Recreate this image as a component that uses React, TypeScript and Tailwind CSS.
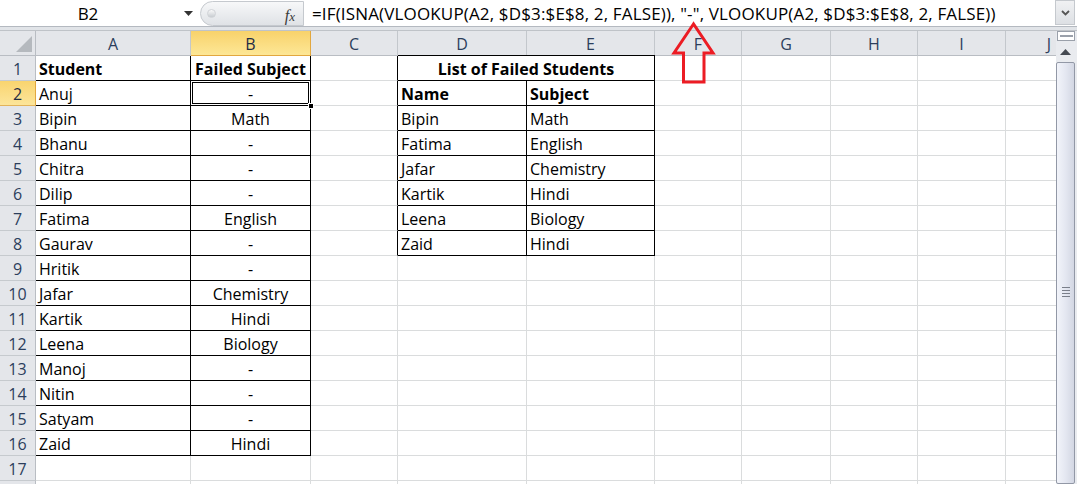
import React from "react";

const FONT = { fontFamily: "'Open Sans', 'Noto Sans', sans-serif" };

const COLS = [
  { k: "A", w: "w-[155px]" },
  { k: "B", w: "w-[120px]" },
  { k: "C", w: "w-[87px]" },
  { k: "D", w: "w-[129px]" },
  { k: "E", w: "w-[128px]" },
  { k: "F", w: "w-[87px]" },
  { k: "G", w: "w-[89px]" },
  { k: "H", w: "w-[87px]" },
  { k: "I", w: "w-[88px]" },
  { k: "J", w: "w-[87px]" },
];

const A = ["Student", "Anuj", "Bipin", "Bhanu", "Chitra", "Dilip", "Fatima", "Gaurav", "Hritik", "Jafar", "Kartik", "Leena", "Manoj", "Nitin", "Satyam", "Zaid"];
const B = ["Failed Subject", "-", "Math", "-", "-", "-", "English", "-", "-", "Chemistry", "Hindi", "Biology", "-", "-", "-", "Hindi"];
const DE: [string, string][] = [
  ["Name", "Subject"],
  ["Bipin", "Math"],
  ["Fatima", "English"],
  ["Jafar", "Chemistry"],
  ["Kartik", "Hindi"],
  ["Leena", "Biology"],
  ["Zaid", "Hindi"],
];

function Cell({ w, border, children, align = "left", bold = false, extra = "" }: { w: string; border: string; children?: React.ReactNode; align?: "left" | "center"; bold?: boolean; extra?: string }) {
  return (
    <div
      className={`${w} h-full shrink-0 box-border border-r border-b ${border} relative flex items-center overflow-visible whitespace-nowrap text-[16px] leading-none text-black pt-[2px] ${align === "center" ? "justify-center" : "pl-[3px]"} ${bold ? "font-bold" : ""} ${extra}`}
    >
      {children}
    </div>
  );
}

const GRID = "border-[#dadcdd]";
const BLACK = "border-black";

function Row({ r }: { r: number }) {
  const sel = r === 2;
  const cells: React.ReactNode[] = [];
  COLS.forEach((c) => {
    if (c.k === "A") {
      const inT = r <= 16;
      cells.push(
        <Cell key="A" w={c.w} border={inT ? BLACK : GRID} bold={r === 1}>
          {inT ? A[r - 1] : ""}
        </Cell>
      );
    } else if (c.k === "B") {
      const inT = r <= 16;
      cells.push(
        <Cell key="B" w={c.w} border={inT ? BLACK : GRID} bold={r === 1} align="center">
          {inT ? B[r - 1] : ""}
          {sel && (
            <>
              <div className="absolute -left-px -top-px -right-px -bottom-px border border-black pointer-events-none">
                <div className="absolute inset-px border border-black" />
              </div>
              <div className="absolute -right-[4px] -bottom-[4px] w-[6px] h-[6px] bg-black border border-white z-10" />
            </>
          )}
        </Cell>
      );
    } else if (c.k === "C") {
      cells.push(
        <div key="C" className={`${c.w} h-full shrink-0 box-border border-b ${GRID} border-r ${r <= 8 ? "border-r-black" : "border-r-[#dadcdd]"}`} />
      );
    } else if (c.k === "D") {
      if (r === 1) {
        cells.push(
          <Cell key="D" w="w-[257px]" border={BLACK} bold align="center" extra="shadow-[0_-1px_0_0_#000]">
            List of Failed Students
          </Cell>
        );
      } else if (r <= 8) {
        const d = DE[r - 2];
        cells.push(
          <Cell key="D" w={c.w} border={BLACK} bold={r === 2}>
            {d[0]}
          </Cell>
        );
      } else {
        cells.push(<Cell key="D" w={c.w} border={GRID} />);
      }
    } else if (c.k === "E") {
      if (r === 1) return;
      if (r <= 8) {
        const d = DE[r - 2];
        cells.push(
          <Cell key="E" w={c.w} border={BLACK} bold={r === 2}>
            {d[1]}
          </Cell>
        );
      } else {
        cells.push(<Cell key="E" w={c.w} border={GRID} />);
      }
    } else {
      cells.push(<Cell key={c.k} w={c.w} border={GRID} />);
    }
  });
  return (
    <div className="flex h-[25px] shrink-0">
      <div
        className={`w-[36px] h-full shrink-0 box-border border-r border-b flex items-center justify-center text-[16px] leading-none pt-[2px] ${
          sel
            ? "bg-gradient-to-b from-[#f9d46e] to-[#fce59a] border-r-[#e2a73f] border-b-[#e2b35a] text-[#1f2d44]"
            : "bg-[#e4e6ea] border-r-[#b9bdc3] border-b-[#c6cace] text-[#2c3e5c]"
        }`}
      >
        {r <= 17 ? r : ""}
      </div>
      {cells}
    </div>
  );
}

function HeaderRow() {
  return (
    <div className="flex h-[26px] shrink-0 box-border border-t border-[#bfc3c8] bg-[#e4e6ea]">
      <div className="w-[36px] h-full shrink-0 box-border border-r border-b border-r-[#b9bdc3] border-b-[#b9bdc3] relative">
        <svg className="absolute right-[3px] bottom-[3px]" width="16" height="16" viewBox="0 0 16 16">
          <polygon points="16,0 16,16 0,16" fill="#b5b9be" />
        </svg>
      </div>
      {COLS.map((c) => (
        <div
          key={c.k}
          className={`${c.w} h-full shrink-0 box-border border-r border-b flex items-center justify-center text-[16px] leading-none pt-[2px] ${
            c.k === "B"
              ? "bg-gradient-to-b from-[#f8d26a] to-[#fde796] border-r-[#e2a73f] border-b-[#e2a73f] text-[#1f2d44]"
              : "border-r-[#c3c7cc] border-b-[#b9bdc3] text-[#2c3e5c]"
          }`}
        >
          {c.k}
        </div>
      ))}
    </div>
  );
}

function FormulaBar() {
  return (
    <div className="flex h-[27px] shrink-0 bg-white box-border border-b border-[#b4b9c0]">
      <div className="w-[176px] h-full flex items-center justify-center text-[17px] leading-none text-black pt-[1px]">B2</div>
      <div className="w-[24px] h-full flex items-center justify-center">
        <svg width="9" height="5" viewBox="0 0 9 5">
          <polygon points="0,0 9,0 4.5,5" fill="#333" />
        </svg>
      </div>
      <div className="w-[104px] h-[25px] mt-[1px] box-border border-y border-r border-[#c5c9ce] rounded-l-[13px] border-l bg-gradient-to-b from-[#f7f8f9] to-[#dfe2e6] relative flex items-center">
        <div className="absolute left-[6px] top-[7px] w-[9px] h-[9px] rounded-full bg-gradient-to-b from-[#fafafa] to-[#c8ccd1] border border-[#d0d3d7]" />
        <span className="absolute right-[8px] top-[2px] text-[16px] italic text-[#3a3a3a]" style={{ fontFamily: "'Liberation Serif', serif" }}>
          f<span className="text-[13px]">x</span>
        </span>
      </div>
      <div className="flex-1 h-full flex items-center pl-[8px] text-[17px] tracking-[0.15px] leading-none text-black whitespace-nowrap overflow-hidden pt-[1px]">
        =IF(ISNA(VLOOKUP(A2, $D$3:$E$8, 2, FALSE)), "-", VLOOKUP(A2, $D$3:$E$8, 2, FALSE))
      </div>
      <div className="w-[20px] h-[25px] box-border border border-[#c5c9ce] bg-gradient-to-b from-[#f0f1f3] to-[#dde0e4] flex items-center justify-center mr-[2px]">
        <svg width="9" height="6" viewBox="0 0 9 6">
          <polyline points="1,1 4.5,4.5 8,1" fill="none" stroke="#555" strokeWidth="1.8" />
        </svg>
      </div>
    </div>
  );
}

function ScrollBar() {
  return (
    <div className="w-[21px] h-full shrink-0 flex flex-col bg-[#e9ebef] box-border border-t border-[#bfc3c8]">
      <div className="h-[10px] mx-[1px] mr-[2px] bg-white box-border border border-[#9aa0aa] flex items-center justify-center">
        <div className="w-[13px] h-[2px] border-y border-[#9aa0aa]" />
      </div>
      <div className="h-[21px] mr-[2px] flex items-center justify-center">
        <svg width="11" height="6" viewBox="0 0 11 6">
          <polygon points="5.5,0 11,6 0,6" fill="#454a52" />
        </svg>
      </div>
      <div className="flex-1 mr-[2px] box-border border border-[#9298a6] rounded-[2px] bg-gradient-to-r from-[#f2f4fa] via-[#e4e7f1] to-[#d3d7e3] relative">
        <div className="absolute left-1/2 top-[224px] -translate-x-1/2 flex flex-col gap-[2px]">
          <div className="w-[8px] h-px bg-[#7a7f8a]" />
          <div className="w-[8px] h-px bg-[#7a7f8a]" />
          <div className="w-[8px] h-px bg-[#7a7f8a]" />
          <div className="w-[8px] h-px bg-[#7a7f8a]" />
        </div>
      </div>
    </div>
  );
}

export default function App() {
  const rows = Array.from({ length: 18 }, (_, i) => i + 1);
  return (
    <div className="w-[1077px] h-[484px] overflow-hidden relative bg-white" style={FONT}>
      <FormulaBar />
      <div className="h-[3px] bg-[#e1e4e8]" />
      <div className="flex h-[454px]">
        <div className="flex-1 overflow-hidden flex flex-col">
          <HeaderRow />
          {rows.map((r) => (
            <Row key={r} r={r} />
          ))}
        </div>
        <ScrollBar />
      </div>
      <svg className="absolute left-[670px] top-[20px] pointer-events-none" width="48" height="66" viewBox="670 20 48 66">
        <polygon
          points="693.5,24 674,53 683.5,53 683.5,82 704,82 704,53 713,53"
          fill="none"
          stroke="#ec1c24"
          strokeWidth="3"
          strokeLinejoin="miter"
        />
      </svg>
    </div>
  );
}
